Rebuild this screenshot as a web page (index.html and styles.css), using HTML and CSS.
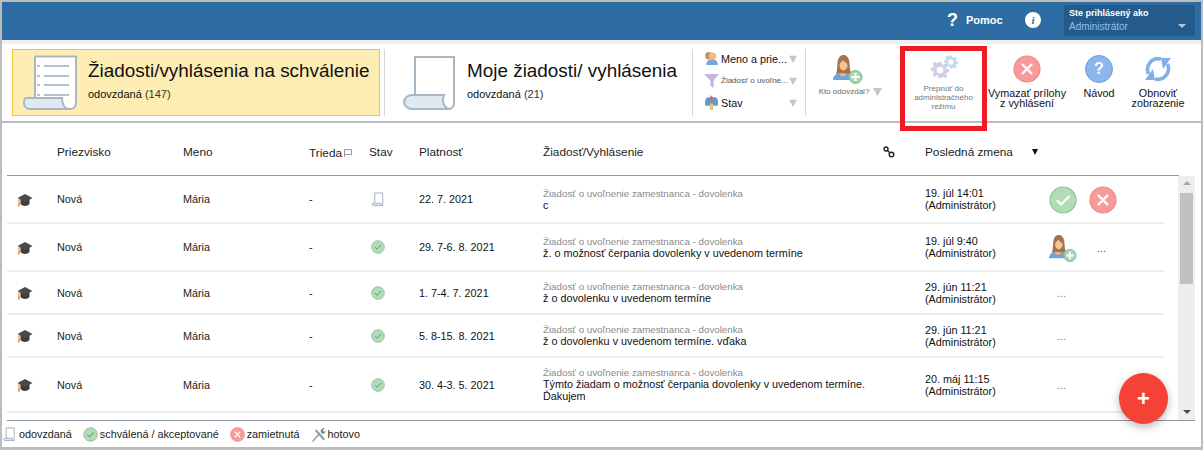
FILE: index.html
```html
<!DOCTYPE html>
<html lang="sk">
<head>
<meta charset="utf-8">
<title>Žiadosti</title>
<link rel="stylesheet" href="styles.css">
</head>
<body>
<svg class="sprite" width="0" height="0" aria-hidden="true">
  <defs>
    <symbol id="cap" viewBox="0 0 16 14">
      <path d="M3.5 6v5c2 2.6 7 2.6 9 0V6z" fill="#3d3d3d"/>
      <path d="M8 1 .5 5 8 9l7.500-4z" fill="#4a4a4a"/>
      <path d="M2 6v5" stroke="#e8a33d" stroke-width="1.300" fill="none"/>
      <rect x="1" y="10.500" width="2" height="3" fill="#e8a33d"/>
    </symbol>
    <symbol id="doc" viewBox="0 0 14 16">
      <path d="M3.500 12V1h8.500v13.500" fill="#fff" stroke="#9fb0c0" stroke-width="1"/>
      <path d="M3 12h7c0 1 .5 2.500 2 2.500H2.500C1 14.500.5 13.500.5 13c0-.5 1-1 2.500-1z" fill="#dfe9f1" stroke="#9fb0c0" stroke-width="1"/>
    </symbol>
    <symbol id="ok" viewBox="0 0 28 28">
      <circle cx="14" cy="14" r="13" fill="#b2dcb8" stroke="#8cc296" stroke-width="1.200"/>
      <path d="M8 14.500l4.200 4L20.500 10" fill="none" stroke="#fff" stroke-width="2.200"/>
    </symbol>
    <symbol id="ok-small" viewBox="0 0 14 14">
      <circle cx="7" cy="7" r="6.300" fill="#b2dcb8" stroke="#86bb90" stroke-width=".8"/>
      <path d="M4 7.200l2.100 2L10 5" fill="none" stroke="#5f9c6b" stroke-width="1"/>
    </symbol>
    <symbol id="no" viewBox="0 0 28 28">
      <circle cx="14" cy="14" r="13" fill="#f89a9a" stroke="#e88" stroke-width="1.200"/>
      <path d="M9 9l10 10M19 9 9 19" fill="none" stroke="#fff" stroke-width="2.400"/>
    </symbol>
    <symbol id="user-add" viewBox="0 0 30 30">
      <path d="M0 26c0-5 4-7 9.500-7s9.500 2 9.500 7z" fill="#6ea3dc"/>
      <path d="M6.500 21c2 2 4.500 2 6.500 0l-1-4H7.500z" fill="#e9b583"/>
      <path d="M3 19.500c1.500-3 1-6 1.500-10.500C5 3.500 7.500 1 10.500 1s5.500 2.500 6 7.500c.4 4 0 8 2 10.500-2 1.200-4.500 1.200-5.500.5l-6-.5c-1 .8-3 1.200-4.500.5z" fill="#a9714b"/>
      <ellipse cx="10.500" cy="11.500" rx="4" ry="5" fill="#f2c593"/>
      <path d="M6 10c1.500-1 3-3 4-4.500 1 2 3 3.500 5 4.500l-.5-4L10 3.500 6.500 6z" fill="#a9714b"/>
      <circle cx="22.500" cy="23" r="6.500" fill="#a9d6b0" stroke="#7fb98a"/>
      <path d="M22.500 19v8M18.500 23h8" stroke="#fff" stroke-width="2"/>
    </symbol>
    <symbol id="arrow" viewBox="0 0 10 10">
      <path d="M0 1h10L5 10z" fill="#c6c6c6"/>
    </symbol>
    <symbol id="gear" viewBox="0 0 24 24">
      <path fill-rule="evenodd" d="M10 1h4l.6 3.200 1.900.8L19.200 3l2.800 2.800-2 2.700.8 1.900 3.200.6v4l-3.200.6-.8 1.900 2 2.700-2.800 2.800-2.700-2-1.900.8L14 23h-4l-.6-3.200-1.900-.8-2.700 2L2 18.200l2-2.700-.8-1.900L0 13V9l3.200-.6.800-1.900-2-2.700L4.800 1l2.700 2 1.900-.8zM12 7.500a4.500 4.500 0 1 0 0 9 4.500 4.500 0 0 0 0-9z"/>
    </symbol>
  </defs>
</svg>

<div class="frame">
  <header class="topbar">
    <span class="help-mark">?</span>
    <span class="help-label">Pomoc</span>
    <span class="info-badge">i</span>
    <div class="account">
      <div class="account-title">Ste prihlásený ako</div>
      <div class="account-row"><span>Administrátor</span><span class="account-caret"></span></div>
    </div>
  </header>

  <nav class="toolbar">
    <div class="tile tile-active">
      <svg class="tile-icon" viewBox="0 0 56 56">
        <path d="M12 44V1.500h41V48c0 3-2 6-6 6" fill="#fff" stroke="#a9b7c4" stroke-width="2"/>
        <path d="M3 43h36c0 5 2 11 8 11H7c-4 0-6-3-6-6s1-5 2-5z" fill="#dfe9f1" stroke="#a9b7c4" stroke-width="2"/>
        <path d="M21 11h25M21 21h25M21 30h25M21 40h25" stroke="#b4c0cb" stroke-width="2"/>
        <path d="M14 11h3M14 21h3M14 30h3M14 40h3" stroke="#b4c0cb" stroke-width="2"/>
      </svg>
      <div class="tile-text">
        <div class="tile-title">Žiadosti/vyhlásenia na schválenie</div>
        <div class="tile-sub">odovzdaná <span class="muted">(147)</span></div>
      </div>
    </div>
    <div class="tile tile-plain">
      <svg class="tile-icon" viewBox="0 0 56 56">
        <path d="M12 40V2h39v46c0 3-2 6-6 6" fill="#fff" stroke="#a9b7c4" stroke-width="2"/>
        <path d="M9 40h32c-2 3-2 10 4 14H9c-4 0-8-3-8-7s4-7 8-7z" fill="#dfe9f1" stroke="#a9b7c4" stroke-width="2"/>
      </svg>
      <div class="tile-text">
        <div class="tile-title">Moje žiadosti/ vyhlásenia</div>
        <div class="tile-sub">odovzdaná <span class="muted">(21)</span></div>
      </div>
    </div>
    <div class="filters">
      <div class="filter">
        <svg class="filter-icon" viewBox="0 0 14 14"><circle cx="4.500" cy="4.500" r="3.500" fill="#c2935f"/><circle cx="8" cy="5" r="3.500" fill="#eebd8c"/><path d="M2 13c0-4 3-5 6-5s5 2 5 5z" fill="#7ba6d6"/></svg>
        <span class="filter-label">Meno a prie...</span>
        <svg class="filter-arrow"><use href="#arrow"/></svg>
      </div>
      <div class="filter">
        <svg class="filter-icon" viewBox="0 0 14 14"><path d="M0 1h14L9 7v7L6 12V7z" fill="#c5b6dd"/></svg>
        <span class="filter-label filter-label-small">Žiadosť o uvoľne...</span>
        <svg class="filter-arrow"><use href="#arrow"/></svg>
      </div>
      <div class="filter">
        <svg class="filter-icon" viewBox="0 0 14 14"><path d="M1 6c0-3 2-4 3-4h6c2 0 3 2 3 4v4H1z" fill="#6c98c8"/><rect x="5.500" y="8" width="3" height="6" fill="#eac07c"/><path d="M6 0v5h2V2z" fill="#d9635c"/></svg>
        <span class="filter-label">Stav</span>
        <svg class="filter-arrow"><use href="#arrow"/></svg>
      </div>
    </div>
    <div class="tool tool-who">
      <svg class="tool-icon"><use href="#user-add"/></svg>
      <div class="who-label">Kto odovzdal? <svg class="who-arrow"><use href="#arrow"/></svg></div>
    </div>
    <div class="tool tool-admin">
      <svg class="gears" viewBox="0 0 30 24">
        <use href="#gear" x="2" y="6" width="18" height="18" fill="#d3cbe8"/>
        <use href="#gear" x="15" y="0" width="14" height="14" fill="#bcdcf1"/>
      </svg>
      <div class="admin-label">Prepnúť do<br>administračného<br>režimu</div>
    </div>
    <div class="tool tool-clear">
      <svg class="round-icon"><use href="#no"/></svg>
      <div class="tool-label">Vymazať prílohy<br>z vyhlásení</div>
    </div>
    <div class="tool tool-guide">
      <span class="guide-icon">?</span>
      <div class="tool-label">Návod</div>
    </div>
    <div class="tool tool-refresh">
      <svg class="round-icon" viewBox="0 0 28 28" fill="none" stroke="#7fb0e6" stroke-width="3.600">
        <path d="M17 4A10.800 10.800 0 0 0 4.500 19"/>
        <path d="M11 24A10.800 10.800 0 0 0 23.500 9"/>
        <path d="M1 25h10L9 14zM27 3H17l2 11z" stroke="none" fill="#7fb0e6"/>
      </svg>
      <div class="tool-label">Obnoviť<br>zobrazenie</div>
    </div>
  </nav>

  <main class="table-area">
    <div class="thead row-grid">
      <span></span>
      <span>Priezvisko</span>
      <span>Meno</span>
      <span class="th-class">Trieda<svg class="flag" viewBox="0 0 8 8"><path d="M.5 8V.5h7v5h-7" fill="none" stroke="#999"/></svg></span>
      <span>Stav</span>
      <span>Platnosť</span>
      <span>Žiadosť/Vyhlásenie</span>
      <svg class="link-icon" viewBox="0 0 12 12" fill="none" stroke="#222" stroke-width="1.400"><circle cx="3" cy="3" r="2"/><circle cx="8.500" cy="8.500" r="2.300"/><path d="M4.500 4.500l2 2"/></svg>
      <span class="th-change">Posledná zmena<span class="sort"></span></span>
      <span></span>
    </div>

    <div class="body-wrap">
      <div class="rows">
        <div class="row row-grid row-h48">
          <svg class="cap"><use href="#cap"/></svg>
          <span class="name">Nová</span><span class="name">Mária</span><span>-</span>
          <svg class="status status-doc"><use href="#doc"/></svg>
          <span>22. 7. 2021</span>
          <div class="request"><div class="req-type">Žiadosť o uvoľnenie zamestnanca - dovolenka</div><div>c</div></div>
          <span></span>
          <div class="changed">19. júl 14:01<br>(Administrátor)</div>
          <div class="actions">
            <svg class="act"><use href="#ok"/></svg>
            <svg class="act"><use href="#no"/></svg>
          </div>
        </div>
        <div class="row row-grid row-h48">
          <svg class="cap"><use href="#cap"/></svg>
          <span class="name">Nová</span><span class="name">Mária</span><span>-</span>
          <svg class="status"><use href="#ok-small"/></svg>
          <span>29. 7-6. 8. 2021</span>
          <div class="request"><div class="req-type">Žiadosť o uvoľnenie zamestnanca - dovolenka</div><div>ž. o možnosť čerpania dovolenky v uvedenom termíne</div></div>
          <span></span>
          <div class="changed">19. júl 9:40<br>(Administrátor)</div>
          <div class="actions">
            <svg class="act"><use href="#user-add"/></svg>
            <span class="dots dots-far">...</span>
          </div>
        </div>
        <div class="row row-grid row-h43">
          <svg class="cap"><use href="#cap"/></svg>
          <span class="name">Nová</span><span class="name">Mária</span><span>-</span>
          <svg class="status"><use href="#ok-small"/></svg>
          <span>1. 7-4. 7. 2021</span>
          <div class="request"><div class="req-type">Žiadosť o uvoľnenie zamestnanca - dovolenka</div><div>ž o dovolenku v uvedenom termíne</div></div>
          <span></span>
          <div class="changed">29. jún 11:21<br>(Administrátor)</div>
          <div class="actions"><span class="dots">...</span></div>
        </div>
        <div class="row row-grid row-h43">
          <svg class="cap"><use href="#cap"/></svg>
          <span class="name">Nová</span><span class="name">Mária</span><span>-</span>
          <svg class="status"><use href="#ok-small"/></svg>
          <span>5. 8-15. 8. 2021</span>
          <div class="request"><div class="req-type">Žiadosť o uvoľnenie zamestnanca - dovolenka</div><div>ž o dovolenku v uvedenom termíne. vďaka</div></div>
          <span></span>
          <div class="changed">29. jún 11:21<br>(Administrátor)</div>
          <div class="actions"><span class="dots">...</span></div>
        </div>
        <div class="row row-grid row-h55">
          <svg class="cap"><use href="#cap"/></svg>
          <span class="name">Nová</span><span class="name">Mária</span><span>-</span>
          <svg class="status"><use href="#ok-small"/></svg>
          <span>30. 4-3. 5. 2021</span>
          <div class="request"><div class="req-type">Žiadosť o uvoľnenie zamestnanca - dovolenka</div><div>Týmto žiadam o možnosť čerpania dovolenky v uvedenom termíne. Ďakujem</div></div>
          <span></span>
          <div class="changed">20. máj 11:15<br>(Administrátor)</div>
          <div class="actions"><span class="dots">...</span></div>
        </div>
      </div>
      <div class="scrollbar">
        <span class="scroll-up"></span>
        <span class="scroll-thumb"></span>
        <span class="scroll-down"></span>
      </div>
    </div>
  </main>

  <footer class="legend">
    <span class="legend-item"><svg class="legend-icon"><use href="#doc"/></svg>odovzdaná</span>
    <span class="legend-item"><svg class="legend-icon"><use href="#ok-small"/></svg>schválená / akceptované</span>
    <span class="legend-item"><svg class="legend-icon" viewBox="0 0 28 28"><use href="#no"/></svg>zamietnutá</span>
    <span class="legend-item"><svg class="legend-icon" viewBox="0 0 14 14"><path d="M1 13l7-8 1 1-7 8zM5 2l8 9-1.500 1.500-8-9z" fill="#8ea3b5"/><path d="M9 4c0-2 2-3.500 4-3l-2 2 .5 1 1.500.5 1-1.500c.2 2-2 4-4 3z" fill="#6f8497"/></svg>hotovo</span>
  </footer>

  <button class="fab" type="button">+</button>
  <div class="callout"></div>
</div>
</body>
</html>
```
FILE: styles.css
```css
* { box-sizing: border-box; }
html, body { margin: 0; padding: 0; }
body {
  font-family: "Liberation Sans", Arial, sans-serif;
  font-size: 10.800px;
  color: #111;
  background: #fff;
}
.sprite { position: absolute; }
.frame {
  position: relative;
  width: 1203px;
  height: 450px;
  border: 2px solid #bcbcbc;
  border-bottom-width: 3px;
  background: #fff;
  overflow: hidden;
}

/* Top bar */
.topbar {
  height: 38px;
  background: #2d6da3;
  display: flex;
  align-items: center;
  color: #fff;
  padding: 0 0 2px 945px;
}
.help-mark { font-size: 18px; font-weight: bold; width: 19px; }
.help-label { font-size: 11px; font-weight: bold; width: 59px; }
.info-badge {
  width: 16px;
  height: 16px;
  border-radius: 50%;
  background: #fff;
  color: #2d6da3;
  font: italic bold 11px/16px "Liberation Serif", serif;
  text-align: center;
}
.account {
  margin-left: 23px;
  width: 131px;
  height: 31px;
  background: #255b8a;
  border-radius: 2px;
  padding: 2px 5px;
  line-height: 13px;
  font-size: 10px;
}
.account-title { font-weight: bold; font-size: 9px; }
.account-row {
  display: flex;
  justify-content: space-between;
  align-items: center;
  color: #8fc0ea;
}
.account-caret {
  border: 4px solid transparent;
  border-top: 4px solid #b5c8d8;
  border-bottom: 0;
  margin-right: 4px;
}

/* Toolbar */
.toolbar {
  height: 83px;
  border-top: 4px solid #efefef;
  border-bottom: 2px solid #bcbcbc;
  display: flex;
  align-items: stretch;
  padding: 5px 0 5px 10px;
}
.tile {
  display: flex;
  align-items: center;
}
.tile-active {
  width: 368px;
  background: #fdedb3;
  border: 1px solid #f0c33c;
  padding-left: 10px;
  margin-right: 4px;
}
.tile-plain {
  width: 308px;
  border-left: 1px solid #d6d6d6;
  padding-left: 18px;
}
.tile-icon { width: 56px; height: 56px; margin-right: 9px; flex: none; }
.tile-plain .tile-icon { margin-right: 8px; }
.tile-text { margin-bottom: 6px; }
.tile-title { font-size: 18.900px; line-height: 26px; color: #111; white-space: nowrap; }
.tile-sub { font-size: 11px; line-height: 14px; margin-top: 3px; color: #111; }
.muted { color: #333; }

.filters {
  width: 113px;
  border-left: 1px solid #d6d6d6;
  padding: 2px 8px 0 11px;
  display: flex;
  flex-direction: column;
  gap: 7px;
}
.filter {
  height: 15px;
  display: flex;
  align-items: center;
  position: relative;
}
.filter-icon { width: 15px; height: 15px; margin-right: 2px; flex: none; }
.filter-label { flex: 1; white-space: nowrap; overflow: hidden; }
.filter-label-small { font-size: 8px; color: #555; }
.filter-arrow { width: 8px; height: 8px; flex: none; }

.tool {
  display: flex;
  flex-direction: column;
  align-items: center;
  text-align: center;
}
.tool-who {
  width: 90px;
  border-left: 1px solid #d6d6d6;
  padding-top: 5px;
}
.tool-icon { width: 30px; height: 30px; margin-right: 6px; }
.who-label { font-size: 8px; color: #666; margin-top: 3px; display: flex; align-items: center; gap: 4px; }
.who-arrow { width: 9px; height: 9px; }
.tool-admin { width: 87px; margin-left: 5px; padding-top: 6px; }
.gears { width: 30px; height: 24px; }
.admin-label { font-size: 8px; line-height: 9px; color: #777; margin-top: 5px; }
.tool-clear { width: 80px; padding-top: 6px; }
.round-icon { width: 28px; height: 28px; }
.tool-label { font-size: 10.800px; line-height: 10px; margin-top: 5px; color: #111; white-space: nowrap; }
.tool-guide { width: 64px; padding-top: 6px; }
.guide-icon {
  width: 28px;
  height: 28px;
  border-radius: 50%;
  background: #8db6ec;
  border: 1px solid #6f9fdc;
  color: #fff;
  font: bold 16px/26px "Liberation Sans", Arial, sans-serif;
}
.tool-refresh { width: 54px; padding-top: 6px; }

/* Table */
.table-area { margin-left: 5px; }
.row-grid {
  display: grid;
  grid-template-columns: 50px 126px 126px 60px 50px 124px 340px 42px 124px 1fr;
  align-items: center;
}
.thead {
  width: 1172px;
  height: 53px;
  font-size: 11.800px;
  color: #222;
  border-bottom: 1px solid #8e9aa6;
  padding-top: 6px;
}
.th-class { position: relative; top: 1px; }
.flag { width: 8px; height: 8px; margin-left: 2px; }
.link-icon { width: 12px; height: 12px; }
.th-change { display: flex; align-items: center; }
.sort {
  margin-left: 19px;
  border: 3px solid transparent;
  border-top: 6px solid #111;
  border-bottom: 0;
}

.body-wrap {
  display: flex;
  height: 245px;
  position: relative;
  border-bottom: 1px solid #8e9aa6;
  width: 1188px;
}
.rows { width: 1157px; margin-right: 14px; }
.row { border-bottom: 2px solid #ececec; }
.row-h48 { height: 48px; }
.row-h43 { height: 43px; }
.row-h55 { height: 55px; }
.cap { width: 16px; height: 14px; margin-left: 10px; margin-top: 1px; }
.name { color: #222; }
.status { width: 14px; height: 14px; margin-left: 2px; }
.status-doc { height: 15px; }
.request { line-height: 12px; color: #111; padding-right: 10px; }
.req-type { font-size: 9.750px; line-height: 11px; color: #8a8a8a; }
.changed { line-height: 12px; color: #111; }
.actions { display: flex; align-items: center; gap: 12px; margin-top: 1px; }
.act { width: 28px; height: 28px; }
.dots { font-size: 11px; color: #9a7c33; margin-left: 8px; }
.dots-far { color: #44557f; margin-left: 8px; }

.scrollbar {
  position: absolute;
  left: 1171px;
  top: 0;
  bottom: 0;
  width: 17px;
  background: #eeeeee;
  display: flex;
  flex-direction: column;
  align-items: center;
  padding-top: 5px;
}
.scroll-up {
  border: 4px solid transparent;
  border-bottom: 4px solid #a9a9a9;
  border-top: 0;
  margin-bottom: 8px;
}
.scroll-thumb { width: 13px; height: 91px; background: #c1c1c1; }
.scroll-down {
  margin-top: auto;
  margin-bottom: 6px;
  border: 4px solid transparent;
  border-top: 4px solid #4d4d4d;
  border-bottom: 0;
}

/* Legend */
.legend {
  height: 26px;
  display: flex;
  align-items: center;
  color: #222;
  gap: 11px;
}
.legend-item { display: flex; align-items: center; gap: 2px; }
.legend-icon { width: 15px; height: 15px; }

/* Floating */
.fab {
  position: absolute;
  left: 1117px;
  top: 371px;
  width: 49px;
  height: 51px;
  border: 0;
  border-radius: 50%;
  background: #f44336;
  color: #fff;
  font: bold 22px/48px "Liberation Sans", Arial, sans-serif;
  padding: 0;
  box-shadow: 0 3px 8px rgba(0, 0, 0, .28);
}
.callout {
  position: absolute;
  left: 898px;
  top: 44px;
  width: 87px;
  height: 85px;
  border: 5px solid #ed1c24;
}
```
